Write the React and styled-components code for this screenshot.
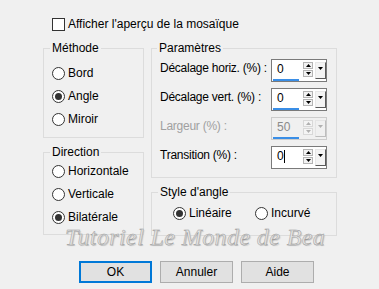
import React from "react";
import styled, { createGlobalStyle } from "styled-components";

const Global = createGlobalStyle`
  html, body { margin: 0; padding: 0; background: #f0f0f0; }
  body { font-family: "Liberation Sans", Arial, sans-serif; font-size: 12px; color: #000; }
`;

const Dialog = styled.div`
  position: relative;
  width: 379px;
  height: 289px;
  box-sizing: border-box;
  padding: 17px 0 0 43px;
  background: #f0f0f0;
  overflow: hidden;
`;

const TopRow = styled.label`
  display: flex;
  align-items: center;
  gap: 3px;
  height: 15px;
  padding-left: 9px;
  line-height: 15px;
`;

const Box = styled.span`
  width: 13px;
  height: 13px;
  box-sizing: border-box;
  border: 1px solid #333;
  background: #fff;
  flex: none;
`;

const Main = styled.div`
  display: grid;
  grid-template-columns: 101px 186px;
  column-gap: 7px;
  margin-top: 8px;
`;

const Column = styled.div`
  display: flex;
  flex-direction: column;
  gap: 6px;
`;

const Group = styled.fieldset`
  margin: 0;
  padding: 0;
  min-width: 0;
  border: 1px solid #dcdcdc;
`;

const Legend = styled.legend`
  margin-left: ${p => p.$offset}px;
  padding: 0 2px;
  line-height: 16px;
  height: 16px;
`;

const RadioList = styled.div`
  display: flex;
  flex-direction: column;
  gap: 7px;
  padding: ${p => p.$pad};
`;

const RadioRow = styled.label`
  display: flex;
  align-items: center;
  gap: 3px;
  height: 16px;
  line-height: 16px;
`;

const Circle = styled.span`
  width: 13px;
  height: 13px;
  box-sizing: border-box;
  border-radius: 50%;
  border: 1px solid #333;
  background: #fff;
  flex: none;
  display: flex;
  align-items: center;
  justify-content: center;
  &::after {
    content: "";
    width: 7px;
    height: 7px;
    border-radius: 50%;
    background: #333;
    display: ${p => (p.$checked ? "block" : "none")};
  }
`;

const ParamGrid = styled.div`
  display: grid;
  grid-template-columns: 111px 56px;
  grid-auto-rows: 23px;
  row-gap: 6px;
  padding: 3px 0 8px 8px;
`;

const ParamLabel = styled.span`
  line-height: 16px;
  padding-top: 1px;
  white-space: nowrap;
  letter-spacing: -0.25px;
  color: ${p => (p.$disabled ? "#a0a0a0" : "#000")};
`;

const Spin = styled.div`
  width: 56px;
  height: 23px;
  box-sizing: border-box;
  border: 1px solid ${p => (p.$disabled ? "#cccccc" : "#7a7a7a")};
  background: ${p => (p.$disabled ? "#f0f0f0" : "#fff")};
  display: flex;
  align-items: flex-start;
  gap: 2px;
  padding: 1px 0 0 0;
`;

const Edit = styled.div`
  width: 29px;
  height: 20px;
  display: flex;
  flex-direction: column;
  padding-top: 1px;
  box-sizing: border-box;
`;

const EditText = styled.span`
  display: flex;
  align-items: center;
  height: 14px;
  line-height: 14px;
  padding-left: 5px;
  color: ${p => (p.$disabled ? "#8a8a8a" : "#000")};
`;

const Caret = styled.span`
  width: 1px;
  height: 13px;
  background: #000;
`;

const Bar = styled.span`
  margin: 3px 0 0 1px;
  width: 26px;
  height: 3px;
  background: ${p => (p.$show ? "#3a8ee6" : "transparent")};
`;

const Arrows = styled.div`
  width: 10px;
  display: flex;
  flex-direction: column;
  gap: 1px;
  margin-top: 1px;
`;

const ArrowBtn = styled.span`
  height: ${p => p.$h}px;
  box-sizing: border-box;
  border: 1px solid ${p => (p.$disabled ? "#d8d8d8" : "#b4b4b4")};
  background: ${p => (p.$disabled ? "#f4f4f4" : "#f2f2f2")};
  display: flex;
  align-items: center;
  justify-content: center;
  svg { display: block; }
`;

const DropBtn = styled.span`
  width: 11px;
  height: 17px;
  margin-top: 1px;
  box-sizing: border-box;
  border-top: 1px solid ${p => (p.$disabled ? "#e4e4e4" : "#e8e8e8")};
  border-left: 1px solid ${p => (p.$disabled ? "#e4e4e4" : "#e8e8e8")};
  border-right: 1px solid ${p => (p.$disabled ? "#bdbdbd" : "#5a5a5a")};
  border-bottom: 1px solid ${p => (p.$disabled ? "#bdbdbd" : "#5a5a5a")};
  background: ${p => (p.$disabled ? "#f0f0f0" : "#f4f4f4")};
  display: flex;
  justify-content: center;
  padding-top: 4px;
  svg { display: block; }
`;

const StyleRow = styled.div`
  display: grid;
  grid-template-columns: 82px auto;
  padding: 5px 0 14px 21px;
`;

const Buttons = styled.div`
  display: flex;
  gap: 8px;
  margin-top: 25px;
  padding-left: 36px;
`;

const Button = styled.button`
  width: 73px;
  height: 22px;
  box-sizing: border-box;
  font: inherit;
  color: #000;
  background: #e1e1e1;
  border: ${p => (p.$primary ? "2px solid #0078d7" : "1px solid #adadad")};
  padding: 0;
`;

const Watermark = styled.div`
  position: absolute;
  left: 65px;
  top: 224px;
  font-family: "Liberation Serif", "DejaVu Serif", serif;
  font-style: italic;
  font-size: 24px;
  letter-spacing: 0.4px;
  color: #e4e4e4;
  -webkit-text-stroke: 0.45px #969696;
  text-shadow: 1px 1px 1px #c4c4c4;
  white-space: nowrap;
  pointer-events: none;
`;

const Tri = ({ up, color }) => (
  <svg width="5" height="3" viewBox="0 0 5 3">
    <polygon points={up ? "2.5,0 5,3 0,3" : "0,0 5,0 2.5,3"} fill={color} />
  </svg>
);

const Radio = ({ checked, children }) => (
  <RadioRow>
    <Circle $checked={checked} />
    {children}
  </RadioRow>
);

const SpinField = ({ value, disabled, caret, bar }) => {
  const c = disabled ? "#b0b0b0" : "#000";
  return (
    <Spin $disabled={disabled}>
      <Edit>
        <EditText $disabled={disabled}>
          {value}
          {caret && <Caret />}
        </EditText>
        <Bar $show={bar} />
      </Edit>
      <Arrows>
        <ArrowBtn $h={7} $disabled={disabled}><Tri up color={c} /></ArrowBtn>
        <ArrowBtn $h={7} $disabled={disabled}><Tri color={c} /></ArrowBtn>
      </Arrows>
      <DropBtn $disabled={disabled}><Tri color={c} /></DropBtn>
    </Spin>
  );
};

export default function App() {
  return (
    <>
      <Global />
      <Dialog>
        <TopRow>
          <Box />
          Afficher l'aperçu de la mosaïque
        </TopRow>
        <Main>
          <Column>
            <Group>
              <Legend $offset={6}>Méthode</Legend>
              <RadioList $pad="9px 0 10px 8px">
                <Radio>Bord</Radio>
                <Radio checked>Angle</Radio>
                <Radio>Miroir</Radio>
              </RadioList>
            </Group>
            <Group>
              <Legend $offset={6}>Direction</Legend>
              <RadioList $pad="3px 0 9px 8px">
                <Radio>Horizontale</Radio>
                <Radio>Verticale</Radio>
                <Radio checked>Bilatérale</Radio>
              </RadioList>
            </Group>
          </Column>
          <Column>
            <Group>
              <Legend $offset={5}>Paramètres</Legend>
              <ParamGrid>
                <ParamLabel>Décalage horiz. (%) :</ParamLabel>
                <SpinField value="0" bar />
                <ParamLabel>Décalage vert. (%) :</ParamLabel>
                <SpinField value="0" bar />
                <ParamLabel $disabled>Largeur (%) :</ParamLabel>
                <SpinField value="50" bar disabled />
                <ParamLabel>Transition (%) :</ParamLabel>
                <SpinField value="0" caret />
              </ParamGrid>
            </Group>
            <Group>
              <Legend $offset={6}>Style d'angle</Legend>
              <StyleRow>
                <Radio checked>Linéaire</Radio>
                <Radio>Incurvé</Radio>
              </StyleRow>
            </Group>
          </Column>
        </Main>
        <Buttons>
          <Button $primary>OK</Button>
          <Button>Annuler</Button>
          <Button>Aide</Button>
        </Buttons>
        <Watermark>Tutoriel Le Monde de Bea</Watermark>
      </Dialog>
    </>
  );
}
